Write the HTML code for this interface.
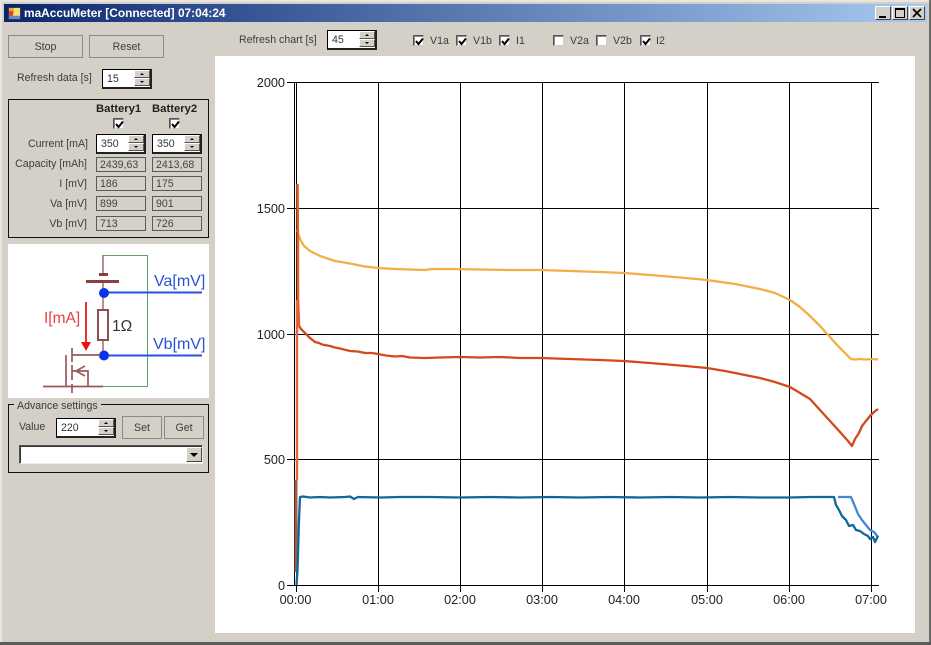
<!DOCTYPE html>
<html><head><meta charset="utf-8">
<style>
html,body{margin:0;padding:0;background:#d4d0c8}
#w{position:relative;width:931px;height:645px;overflow:hidden;background:#d4d0c8;font:10.6px/14px "Liberation Sans",sans-serif;color:#3c3c3c}
#w div,#w span.a{position:absolute;box-sizing:border-box}
.t{white-space:nowrap;height:14px}
.r{text-align:right}
.btn{border:1px solid #8c8a85;background:#d4d0c8;text-align:center}
.sp{background:#fff;border:1px solid #000;border-right:2px solid #222;border-bottom:2px solid #222;padding:2px 0 0 4px;color:#333}
.sp i{position:absolute;right:0;width:16px;height:8px;background:#d4d0c8;border:1px solid;border-color:#fff #555 #555 #fff;box-sizing:border-box}
.sp i.u{top:0}.sp i.d{top:8px}
.sp i:after{content:"";position:absolute;left:5px;width:0;height:0;border-left:2px solid transparent;border-right:2px solid transparent}
.sp i.u:after{top:2px;border-bottom:2px solid #000}
.sp i.d:after{top:2px;border-top:2px solid #000}
.ro{border:1px solid #5a5a58;background:#d4d0c8;padding:0 0 0 3px;height:15px;line-height:14px;color:#444}
.cb{width:11px;height:11px;background:#fff;border:1px solid;border-color:#555 #ccc #ccc #555;box-shadow:inset 1px 1px 0 #888}
.cb svg{position:absolute;left:1px;top:1px}
.box{border:1px solid #111}
.wb{width:16px;height:14px;background:#d4d0c8;border:1px solid;border-color:#fff #444 #444 #fff}
</style></head><body>
<div id="w">
<div style="left:0;top:0;width:931px;height:2px;background:#e8e6e0"></div>
<div style="left:0;top:0;width:2px;height:645px;background:#e8e6e0"></div>
<div style="left:929px;top:0;width:2px;height:645px;background:#6a6a68"></div>
<div style="left:0;top:642px;width:931px;height:3px;background:#5c5c5a"></div>
<div style="left:4px;top:4px;width:923px;height:18px;background:linear-gradient(90deg,#0a246a 0%,#2c4b8c 20%,#a6caf0 100%)"></div>

<svg style="position:absolute;left:8px;top:7px" width="13" height="13" viewBox="0 0 13 13"><rect width="13" height="13" fill="#d8c890"/><rect x="0" y="0" width="6" height="6" fill="#e8a838"/><rect x="1" y="4" width="4" height="5" fill="#d84830"/><rect x="6" y="1" width="7" height="7" fill="#f4e070"/><rect x="1" y="9" width="11" height="3.5" fill="#6a88b8"/><path d="M.5.5h12v12H.5z" fill="none" stroke="#2a3a60"/></svg>
<div class="t" style="left:24px;top:6px;color:#fff;font:bold 11.9px/15px 'Liberation Sans',sans-serif">maAccuMeter [Connected] 07:04:24</div>

<div class="wb" style="left:875px;top:6px"><span class="a" style="left:3px;top:9px;width:7px;height:2px;background:#000"></span></div>
<div class="wb" style="left:892px;top:6px"><span class="a" style="left:2px;top:1px;width:10px;height:10px;border:1px solid #000;border-top-width:2px;box-sizing:border-box"></span></div>
<div class="wb" style="left:909px;top:6px"><svg style="position:absolute;left:2px;top:1px" width="10" height="10"><path d="M1 1L9 9M9 1L1 9" stroke="#000" stroke-width="1.7"/></svg></div>

<div class="btn" style="left:8px;top:35px;width:75px;height:23px;line-height:22px">Stop</div>
<div class="btn" style="left:89px;top:35px;width:75px;height:23px;line-height:22px">Reset</div>
<div class="t" style="left:17px;top:71px">Refresh data [s]</div>
<div class="sp" style="left:102px;top:69px;width:50px;height:20px">15<i class="u"></i><i class="d"></i></div>

<div class="box" style="left:8px;top:99px;width:201px;height:139px"></div>
<div class="t" style="left:96px;top:102px;font-weight:bold;font-size:11.3px;color:#222">Battery1</div>
<div class="t" style="left:152px;top:102px;font-weight:bold;font-size:11.3px;color:#222">Battery2</div>
<div class="cb" style="left:113px;top:118px"><svg width="9" height="9"><path d="M1 4L3.5 7L8 1.5" fill="none" stroke="#000" stroke-width="2"/></svg></div>
<div class="cb" style="left:169px;top:118px"><svg width="9" height="9"><path d="M1 4L3.5 7L8 1.5" fill="none" stroke="#000" stroke-width="2"/></svg></div>
<div class="t r" style="left:0;width:88px;top:137px">Current [mA]</div>
<div class="t r" style="left:0;width:87px;top:157px">Capacity [mAh]</div>
<div class="t r" style="left:0;width:87px;top:177px">I [mV]</div>
<div class="t r" style="left:0;width:87px;top:197px">Va [mV]</div>
<div class="t r" style="left:0;width:87px;top:217px">Vb [mV]</div>
<div class="sp" style="left:96px;top:134px;width:50px;height:20px">350<i class="u"></i><i class="d"></i></div>
<div class="sp" style="left:152px;top:134px;width:50px;height:20px">350<i class="u"></i><i class="d"></i></div>
<div class="ro" style="left:96px;top:157px;width:50px">2439,63</div>
<div class="ro" style="left:152px;top:157px;width:50px">2413,68</div>
<div class="ro" style="left:96px;top:176px;width:50px">186</div>
<div class="ro" style="left:152px;top:176px;width:50px">175</div>
<div class="ro" style="left:96px;top:196px;width:50px">899</div>
<div class="ro" style="left:152px;top:196px;width:50px">901</div>
<div class="ro" style="left:96px;top:216px;width:50px">713</div>
<div class="ro" style="left:152px;top:216px;width:50px">726</div>

<svg style="position:absolute;left:8px;top:244px" width="201" height="154" viewBox="8 244 201 154">
<rect x="8" y="244" width="201" height="154" fill="#fff"/>
<path d="M103 255.500H147.500V386.500H103" fill="none" stroke="#5f9e68" stroke-width="1"/>
<path d="M103 255V274M103 281V310M103 340V355" stroke="#a56a6a" stroke-width="1.500" fill="none"/>
<path d="M99 274.500H108" stroke="#8a3e3e" stroke-width="3"/>
<path d="M86 281.500H119" stroke="#8a3e3e" stroke-width="3"/>
<rect x="98" y="310" width="10" height="30" fill="#fff" stroke="#8f4f4f" stroke-width="2"/>
<path d="M104 292.500H202M104 355.500H202" stroke="#2a50e0" stroke-width="2"/>
<circle cx="104" cy="293" r="5" fill="#0a30f0"/>
<circle cx="104" cy="355.500" r="5" fill="#0a30f0"/>
<path d="M86 302V342" stroke="#e83030" stroke-width="2"/>
<path d="M81 342H91L86 351Z" fill="#f01010"/>
<path d="M72 355H100M66 355V386M72 348V362M72 365V380M72 384V393M43 386.500H103M72 371H88V386M76 371L85 366M76 371L85 376" fill="none" stroke="#9a5a5a" stroke-width="1.700"/>
<text x="154" y="286" font-family="Liberation Sans" font-size="16" fill="#2a50d8">Va[mV]</text>
<text x="153" y="349" font-family="Liberation Sans" font-size="16" fill="#2a50d8">Vb[mV]</text>
<text x="44" y="323" font-family="Liberation Sans" font-size="15.500" fill="#e84040">I[mA]</text>
<text x="112" y="331" font-family="Liberation Sans" font-size="15.500" fill="#333">1Ω</text>
</svg>

<div class="box" style="left:8px;top:404px;width:201px;height:69px"></div>
<div class="t" style="left:14px;top:399px;background:#d4d0c8;padding:0 3px">Advance settings</div>
<div class="t" style="left:19px;top:420px">Value</div>
<div class="sp" style="left:56px;top:418px;width:60px;height:20px">220<i class="u"></i><i class="d"></i></div>
<div class="btn" style="left:122px;top:416px;width:40px;height:23px;line-height:22px">Set</div>
<div class="btn" style="left:164px;top:416px;width:40px;height:23px;line-height:22px">Get</div>
<div style="left:19px;top:445px;width:184px;height:19px;background:#fff;border:1px solid;border-color:#555 #eee #eee #555;box-shadow:inset 1px 1px 0 #333"></div>
<div style="left:186px;top:447px;width:16px;height:15px;background:#d4d0c8;border:1px solid;border-color:#fff #444 #444 #fff"><span class="a" style="left:3px;top:5px;width:0;height:0;border-left:4px solid transparent;border-right:4px solid transparent;border-top:4px solid #000"></span></div>

<div class="t" style="left:239px;top:33px">Refresh chart [s]</div>
<div class="sp" style="left:327px;top:30px;width:50px;height:20px">45<i class="u"></i><i class="d"></i></div>

<div class="cb" style="left:413px;top:35px"><svg width="9" height="9"><path d="M1 4L3.5 7L8 1.5" fill="none" stroke="#000" stroke-width="2"/></svg></div>
<div class="t" style="left:430px;top:34px">V1a</div>
<div class="cb" style="left:456px;top:35px"><svg width="9" height="9"><path d="M1 4L3.5 7L8 1.5" fill="none" stroke="#000" stroke-width="2"/></svg></div>
<div class="t" style="left:473px;top:34px">V1b</div>
<div class="cb" style="left:499px;top:35px"><svg width="9" height="9"><path d="M1 4L3.5 7L8 1.5" fill="none" stroke="#000" stroke-width="2"/></svg></div>
<div class="t" style="left:516px;top:34px">I1</div>
<div class="cb" style="left:553px;top:35px"></div>
<div class="t" style="left:570px;top:34px">V2a</div>
<div class="cb" style="left:596px;top:35px"></div>
<div class="t" style="left:613px;top:34px">V2b</div>
<div class="cb" style="left:640px;top:35px"><svg width="9" height="9"><path d="M1 4L3.5 7L8 1.5" fill="none" stroke="#000" stroke-width="2"/></svg></div>
<div class="t" style="left:656px;top:34px">I2</div>

<svg style="position:absolute;left:215px;top:56px" width="700" height="577" viewBox="215 56 700 577">
<rect x="215" y="56" width="700" height="577" fill="#fff"/>
<g stroke="#000" stroke-width="1" fill="none" shape-rendering="crispEdges">
<path d="M287 82.500H879M287 208.500H879M287 334.500H879M287 459.500H879M287 585.500H879"/>
<path d="M294.500 82V585M296.500 82V592M378.500 82V592M460.500 82V592M542.500 82V592M624.500 82V592M707.500 82V592M789.500 82V592M871.500 82V592"/>
</g>
<g font-family="Liberation Sans" font-size="12.700" fill="#222">
<text x="285" y="87" text-anchor="end">2000</text>
<text x="285" y="213" text-anchor="end">1500</text>
<text x="285" y="339" text-anchor="end">1000</text>
<text x="285" y="464" text-anchor="end">500</text>
<text x="285" y="590" text-anchor="end">0</text>
<g text-anchor="middle">
<text x="295.500" y="604">00:00</text>
<text x="378" y="604">01:00</text>
<text x="460" y="604">02:00</text>
<text x="542" y="604">03:00</text>
<text x="624" y="604">04:00</text>
<text x="707" y="604">05:00</text>
<text x="789" y="604">06:00</text>
<text x="871" y="604">07:00</text>
</g></g>
<g fill="none" stroke-linejoin="round">
<path stroke="#f3ae45" stroke-width="2.300" d="M297 230L299 236L301 241L304 246L310 251L320 256L335 261L350 263.500L365 266.500L378 268L395 269L410 269.500L425 270L432 269L450 269L480 269.500L510 270L540 270L570 271L600 272L624 273L650 275L680 277.500L707 280L735 284L760 289L775 293L790 300L800 307L810 316L820 326L830 337L838 346L846 354L851 359L856 359.500L860 359L866 359.500L872 359L878 359.500"/>
<path stroke="#d4481c" stroke-width="2.300" d="M299 326L301 329L305 333L310 338L315 342L319 343L322 344.500L330 346L335 347.500L340 348.500L350 351L358 351.500L365 353L372 353L378 354L386 355.500L395 356.500L402 356L410 357.500L425 358L440 357.500L460 357L480 357.500L500 357L520 358L540 358L570 359L600 360L624 361L650 363L680 365.500L707 368L725 371L745 375L760 378L775 382L790 387L800 393L810 399L820 410L830 421L840 432L848 441L852 446L855 439L859 433L862 426L866 421L870 416L874 412L878 409"/>
<path stroke="#e0602a" stroke-width="2.600" d="M297.500 184L297.800 230L298 300L299 326"/>
<path stroke="#e2683a" stroke-width="2.400" d="M297 300V480"/>
<path stroke="#a85a48" stroke-width="3" d="M296 480V572"/>
<path stroke="#4288d6" stroke-width="2.300" d="M838 497L851 497L854 504L858 514L862 520L866 525L870 530L874 532L878 537"/>
<path stroke="#0e689c" stroke-width="2.300" d="M296.500 585L297.500 570L299 520L300 497L303 496.500L310 497.500L320 497L330 497.500L345 497L350 496.500L354 499L358 497L380 497.500L400 497L430 497L460 497.500L490 497L520 497.500L550 497L580 497.500L610 497L640 497.500L670 497L700 497.500L730 497L760 497.500L790 497.500L810 497L834 497L836 505L839 510L842 516L846 520L849 526L853 525L856 530L860 531L864 534L868 536L870 539L873 537L875 542L878 536"/>
</g>
</svg>
</div>
</body></html>
